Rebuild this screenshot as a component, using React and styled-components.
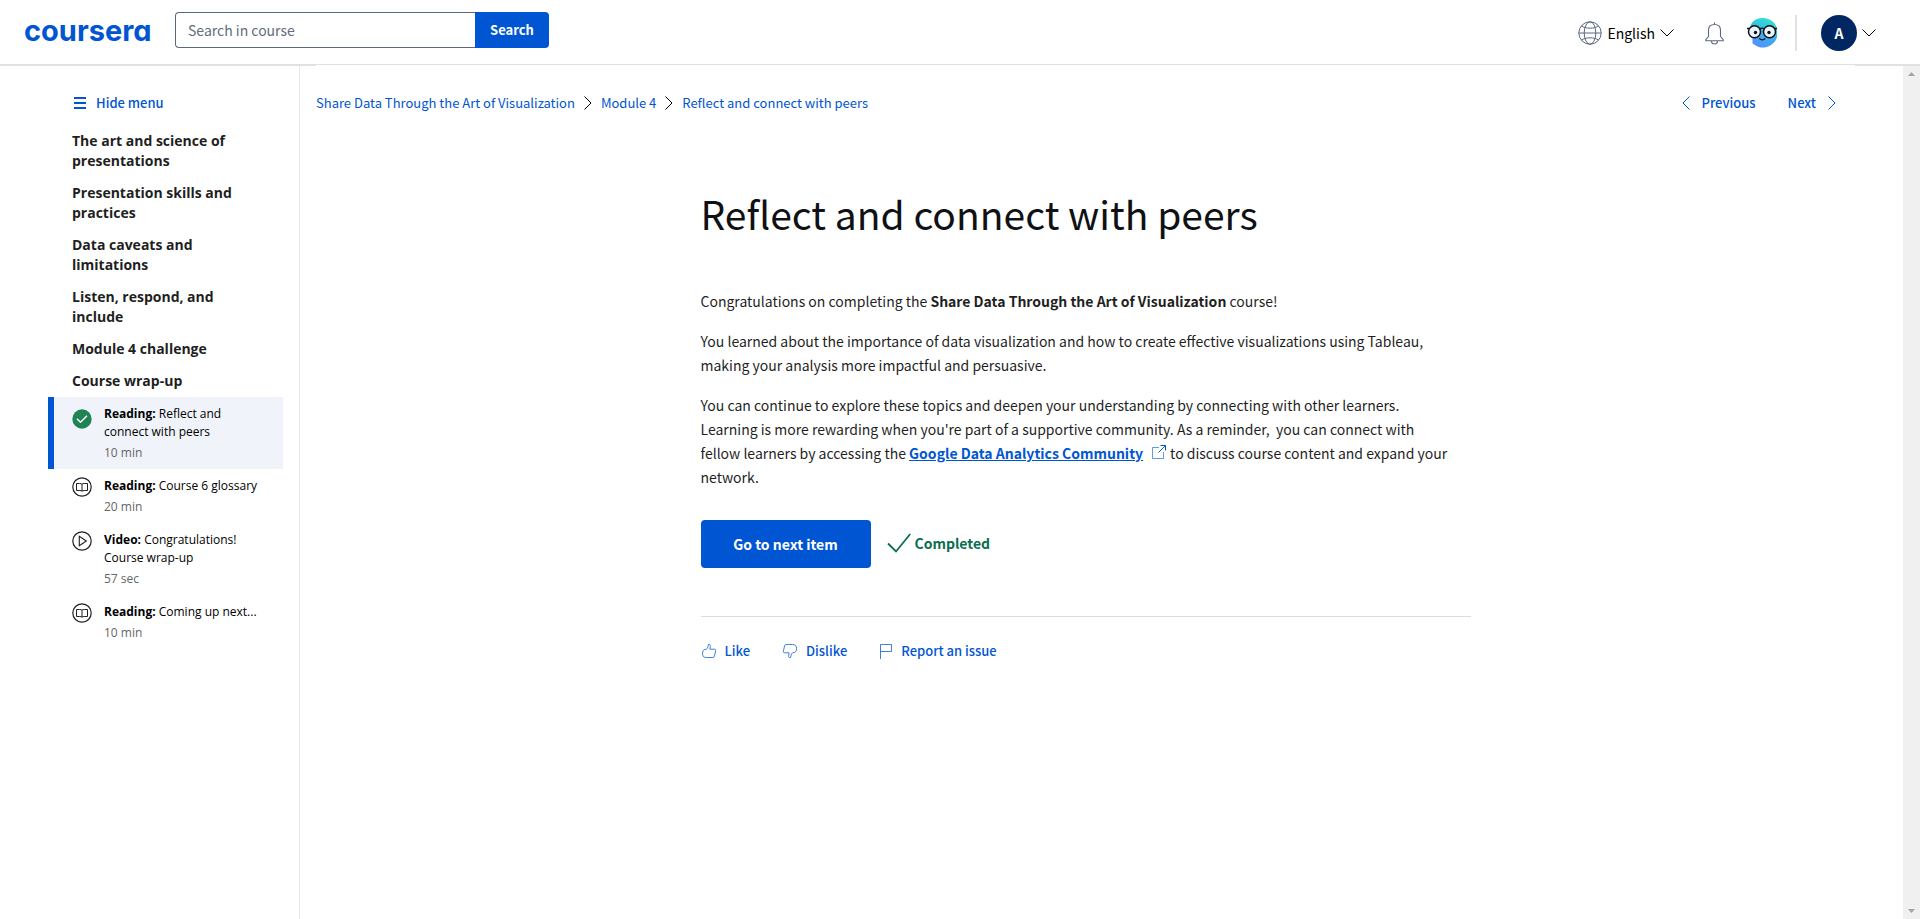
import React from "react";
import styled, { createGlobalStyle, css } from "styled-components";

const BLUE = "#0056d2";
const BODY_FONT = '"Source Sans Pro", "Noto Sans CJK SC", Arial, sans-serif';
const MENU_FONT = '"Open Sans", "Noto Sans", Arial, sans-serif';

const GlobalStyle = createGlobalStyle`
  *, *::before, *::after { box-sizing: border-box; }
  html, body, #root { height: 100%; }
  body {
    margin: 0;
    background: #fff;
    color: #1f1f1f;
    font-family: ${BODY_FONT};
    font-size: 14px;
    line-height: 24px;
  }
  button, input { font: inherit; }
  a { color: ${BLUE}; text-decoration: none; }
  svg { display: block; flex: none; }
`;

const Page = styled.div`
  display: flex;
  flex-direction: column;
  min-height: 100%;
`;

const Header = styled.header`
  display: flex;
  align-items: center;
  height: 66px;
  padding: 0 44px 0 24px;
  border-bottom: 2px solid #e1e1e1;
`;

const Logo = styled.a`
  width: 151px;
  padding-bottom: 2px;
  color: ${BLUE};
  font-family: Inter, Lato, sans-serif;
  font-size: 29px;
  font-weight: 700;
  line-height: 32px;
  font-feature-settings: "cv11";
`;

const SearchForm = styled.form`
  display: flex;
  width: 374px;
  height: 36px;
  margin-bottom: 4px;
`;

const SearchInput = styled.input`
  flex: 1;
  min-width: 0;
  padding: 0 12px;
  border: 1px solid #5b6780;
  border-right: 0;
  border-radius: 4px 0 0 4px;
  outline: 0;
  &::placeholder { color: #636c7c; opacity: 1; }
`;

const SearchButton = styled.button`
  width: 74px;
  padding: 0;
  border: 0;
  border-radius: 0 4px 4px 0;
  background: ${BLUE};
  color: #fff;
  font-size: 13px;
  font-weight: 700;
`;

const HeaderTools = styled.div`
  display: flex;
  align-items: center;
  margin-left: auto;
  padding-top: 2px;
`;

const ToolButton = styled.button`
  display: flex;
  align-items: center;
  gap: 5px;
  padding: 0;
  border: 0;
  background: none;
  color: #000;
`;

const LanguageButton = styled(ToolButton)`
  margin-right: 31px;
`;

const BellButton = styled(ToolButton)`
  margin-right: 23px;
`;

const Divider = styled.span`
  width: 2px;
  height: 36px;
  margin: 0 24px 0 18px;
  background: #e1e1e1;
`;

const Initial = styled.span`
  width: 36px;
  height: 36px;
  border-radius: 50%;
  background: #002761;
  color: #fff;
  font-weight: 700;
  line-height: 36px;
  text-align: center;
`;

const Body = styled.div`
  display: flex;
  flex: 1;
`;

const Sidebar = styled.nav`
  width: 300px;
  flex: none;
  padding: 25px 16px 0 48px;
  border-right: 1px solid #e5e7f5;
`;

const HideMenu = styled.button`
  display: flex;
  align-items: center;
  gap: 10px;
  height: 24px;
  margin: 0 0 10px 26px;
  padding: 0;
  border: 0;
  background: none;
  color: ${BLUE};
  font-size: 13px;
  font-weight: 500;
`;

const SectionTitle = styled.h2`
  margin: 0;
  padding: 6px 24px;
  color: #1f1f1f;
  font: 700 14px/20px ${MENU_FONT};
`;

const ItemList = styled.ul`
  margin: 0;
  padding: 0;
  list-style: none;
`;

const Item = styled.a`
  display: flex;
  gap: 12px;
  padding: 8px 24px 7px 18px;
  border-left: 6px solid transparent;
  color: #000;
  font: 12px/18px ${MENU_FONT};
  ${(p) =>
    p.$active &&
    css`
      border-color: ${BLUE};
      background: #f0f4fa;
      svg { margin-top: 4px; }
    `}
`;

const Duration = styled.span`
  display: block;
  margin-top: 3px;
  color: #666;
`;

const Main = styled.main`
  flex: 1;
  min-width: 0;
  padding: 0 48px 0 16px;
`;

const TopBar = styled.div`
  display: flex;
  align-items: center;
  justify-content: space-between;
  height: 75px;
  margin-top: -1px;
  padding-right: 19px;
  background: #fff;
  font-size: 13px;
`;

const Crumbs = styled.nav`
  display: flex;
  align-items: center;
  gap: 9px;
`;

const Pager = styled.nav`
  display: flex;
  gap: 32px;
`;

const PagerLink = styled.a`
  display: flex;
  align-items: center;
  gap: 12px;
  font-weight: 500;
`;

const Article = styled.article`
  max-width: 770px;
  margin: 0 auto;
  padding-top: 43px;
`;

const Title = styled.h1`
  margin: 0 0 46px;
  color: #0f1114;
  font-size: 39px;
  font-weight: 400;
  line-height: 60px;
`;

const Paragraph = styled.p`
  max-width: 752px;
  margin: 0 0 16px;
`;

const CommunityLink = styled.a`
  font-weight: 700;
  text-decoration: underline;
`;

const ExternalMark = styled.span`
  display: inline-block;
  margin: 0 4px 0 9px;
`;

const Actions = styled.div`
  display: flex;
  align-items: center;
  gap: 16px;
  margin-top: 31px;
  padding-bottom: 48px;
  border-bottom: 1px solid #dadce0;
`;

const NextButton = styled.button`
  width: 170px;
  height: 48px;
  border: 0;
  border-radius: 4px;
  background: ${BLUE};
  color: #fff;
  font-weight: 700;
`;

const Completed = styled.span`
  display: flex;
  align-items: center;
  gap: 4px;
  padding-bottom: 2px;
  color: #0b6e4f;
  font-weight: 700;
`;

const Feedback = styled.div`
  display: flex;
  gap: 32px;
  padding: 22px 0;
`;

const FeedbackButton = styled.button`
  display: flex;
  align-items: center;
  gap: 8px;
  padding: 0;
  border: 0;
  background: none;
  color: ${BLUE};
  font-size: 13px;
  font-weight: 500;
`;

const ScrollTrack = styled.div`
  display: flex;
  flex-direction: column;
  justify-content: space-between;
  align-items: center;
  width: 17px;
  padding: 6px 0;
  background: #f0f0f0;
`;

const Chevron = ({ dir = "right", color = BLUE }) => {
  if (dir === "down")
    return (
      <svg width="14" height="8" viewBox="0 0 14 8" fill="none" stroke={color}>
        <path d="M.5.5 7 7 13.5.5" />
      </svg>
    );
  return (
    <svg width="8" height="14" viewBox="0 0 8 14" fill="none" stroke={color}>
      <path d={dir === "left" ? "M7.5.5 1 7l6.500 6.500" : "M.5.5 7 7 .5 13.500"} />
    </svg>
  );
};

const Globe = () => (
  <svg width="24" height="24" viewBox="0 0 24 24" fill="none" stroke="#5b6780">
    <circle cx="12" cy="12" r="11.200" />
    <ellipse cx="12" cy="12" rx="5.800" ry="11.200" />
    <path d="M.8 12h22.400M3.500 5c2.200 1.400 5 2.200 8.500 2.200S18.300 6.400 20.500 5M3.500 19c2.200-1.400 5-2.200 8.500-2.200s6.300.8 8.500 2.200" />
  </svg>
);

const Bell = () => (
  <svg width="19" height="23" viewBox="0 0 19 23" fill="none" stroke="#5b6780" strokeWidth="1.1" strokeLinejoin="round">
    <path d="M9.500.5v2M3.500 14.500V8.300c0-3.600 2.500-5.800 6-5.800s6 2.200 6 5.800v6.200l2.700 3.200v1H.8v-1zM6.500 18.700c0 2 1.200 3.300 3 3.300s3-1.300 3-3.300" />
  </svg>
);

const Coach = () => (
  <svg width="30" height="30" viewBox="0 0 30 30">
    <defs>
      <linearGradient id="coach" x1=".7" y1="0" x2=".35" y2="1">
        <stop offset="0" stopColor="#2ee6cf" />
        <stop offset=".5" stopColor="#38b4ea" />
        <stop offset="1" stopColor="#5590ff" />
      </linearGradient>
    </defs>
    <path d="M15.500 0A14.800 14.800 0 1 1 5.500 25.300V20.500C-1 8 6 0 15.500 0z" fill="url(#coach)" />
    <g fill="#e9f4fc" stroke="#111" strokeWidth="1.500">
      <circle cx="7.500" cy="13.800" r="6" />
      <circle cx="22.500" cy="13.800" r="6" />
    </g>
    <path d="M0 10.500h2M28 10.500h2M12.500 11c1.500-1 3.500-1 5 0M12.300 20.300c1.500 2 4.400 2 5.900 0" fill="none" stroke="#111" strokeWidth="1.300" />
    <circle cx="8.500" cy="14.500" r="1.700" fill="#111" />
    <circle cx="22" cy="14.500" r="1.700" fill="#111" />
  </svg>
);

const Burger = () => (
  <svg width="12" height="12" viewBox="0 0 12 12" fill={BLUE}>
    <path d="M0 0h12v2H0zM0 5h12v2H0zM0 10h12v2H0z" />
  </svg>
);

const DoneIcon = () => (
  <svg width="20" height="20" viewBox="0 0 20 20" fill="none">
    <circle cx="10" cy="10" r="9.700" fill="#1f8354" />
    <path d="m5 9.700 3.500 3.600L15 6.700" stroke="#fff" strokeWidth="1.400" />
  </svg>
);

const BookIcon = () => (
  <svg width="20" height="20" viewBox="0 0 20 20" fill="none" stroke="#1f1f1f">
    <circle cx="10" cy="10" r="9.200" strokeWidth="1.200" />
    <path d="M10 7.300C9.500 6.600 8.700 6.500 7.500 6.500h-3v7h3.300c1.200 0 1.800.2 2.200.9.400-.7 1-.9 2.200-.9h3.300v-7h-3c-1.200 0-2 .1-2.500.8zv7" />
  </svg>
);

const PlayIcon = () => (
  <svg width="20" height="20" viewBox="0 0 20 20" fill="none" stroke="#1f1f1f">
    <circle cx="10" cy="10" r="9.200" strokeWidth="1.200" />
    <path d="M7.300 5.300v9.400L14.300 10z" strokeWidth="1.100" />
  </svg>
);

const Check = () => (
  <svg width="24" height="20" viewBox="0 0 24 20" fill="none" stroke="#0b6e4f" strokeWidth="1.800">
    <path d="m1 10.500 8 8L23.200 1" />
  </svg>
);

const External = () => (
  <svg width="14" height="14" viewBox="0 0 14 14" fill="none" stroke={BLUE}>
    <path d="M7 2.500H.5v11h11V7" strokeOpacity=".6" />
    <path d="M8.500.5h5v5M13.500.5l-7 7" />
  </svg>
);

const Thumb = ({ down }) => (
  <svg width="16" height="16" viewBox="0 0 16 16" fill="none" stroke={BLUE} strokeOpacity=".75">
    <path
      transform={down ? "rotate(180 8 8)" : undefined}
      d="M5.300 6.300C6.800 5 7.200 3.500 7.300 1.500c1.600-.6 2.400.7 2 2.300L8.900 6.200h4.600c1 0 1.300.8 1.100 1.600l-1.200 5.400c-.2.900-.7 1.300-1.600 1.300H5.400c-2.800 0-3.900-1.200-3.900-4.100s1.300-4.100 3.800-4.100z"
    />
  </svg>
);

const Flag = () => (
  <svg width="14" height="16" viewBox="0 0 14 16" fill="none" stroke={BLUE} strokeOpacity=".75">
    <path d="M1.500 16V1.500h11v7h-11" />
  </svg>
);

const Arrow = ({ up }) => (
  <svg width="7" height="4" viewBox="0 0 7 4" fill="#a3a3a3">
    <path d={up ? "M0 4 3.500 0 7 4z" : "M0 0 3.500 4 7 0z"} />
  </svg>
);

const sections = [
  "The art and science of presentations",
  "Presentation skills and practices",
  "Data caveats and limitations",
  "Listen, respond, and include",
  "Module 4 challenge",
  "Course wrap-up",
];

const items = [
  { kind: "Reading", title: "Reflect and connect with peers", time: "10 min", Icon: DoneIcon, active: true },
  { kind: "Reading", title: "Course 6 glossary", time: "20 min", Icon: BookIcon },
  { kind: "Video", title: "Congratulations! Course wrap-up", time: "57 sec", Icon: PlayIcon },
  { kind: "Reading", title: "Coming up next...", time: "10 min", Icon: BookIcon },
];

export default function App() {
  return (
    <Page>
      <GlobalStyle />
      <Header>
        <Logo href="#">coursera</Logo>
        <SearchForm role="search">
          <SearchInput placeholder="Search in course" aria-label="Search in course" />
          <SearchButton type="button">Search</SearchButton>
        </SearchForm>
        <HeaderTools>
          <LanguageButton type="button" aria-haspopup="true">
            <Globe />
            English
            <Chevron dir="down" color="#000" />
          </LanguageButton>
          <BellButton type="button" aria-label="Notifications">
            <Bell />
          </BellButton>
          <ToolButton type="button" aria-label="Coach">
            <Coach />
          </ToolButton>
          <Divider />
          <ToolButton type="button" aria-haspopup="true">
            <Initial>A</Initial>
            <Chevron dir="down" color="#000" />
          </ToolButton>
        </HeaderTools>
      </Header>
      <Body>
        <Sidebar>
          <HideMenu type="button">
            <Burger />
            Hide menu
          </HideMenu>
          {sections.map((s) => (
            <SectionTitle key={s}>{s}</SectionTitle>
          ))}
          <ItemList>
            {items.map(({ kind, title, time, Icon, active }) => (
              <li key={title}>
                <Item href="#" $active={active}>
                  <Icon />
                  <span>
                    <strong>{kind}:</strong> {title}
                    <Duration>{time}</Duration>
                  </span>
                </Item>
              </li>
            ))}
          </ItemList>
        </Sidebar>
        <Main>
          <TopBar>
            <Crumbs aria-label="Breadcrumb">
              <a href="#">Share Data Through the Art of Visualization</a>
              <Chevron color="#000" />
              <a href="#">Module 4</a>
              <Chevron color="#000" />
              <a href="#">Reflect and connect with peers</a>
            </Crumbs>
            <Pager aria-label="Items">
              <PagerLink href="#">
                <Chevron dir="left" />
                Previous
              </PagerLink>
              <PagerLink href="#">
                Next
                <Chevron />
              </PagerLink>
            </Pager>
          </TopBar>
          <Article>
            <Title>Reflect and connect with peers</Title>
            <Paragraph>
              Congratulations on completing the <strong>Share Data Through the Art of Visualization</strong> course!
            </Paragraph>
            <Paragraph>
              You learned about the importance of data visualization and how to create effective visualizations using
              Tableau, making your analysis more impactful and persuasive.
            </Paragraph>
            <Paragraph>
              You can continue to explore these topics and deepen your understanding by connecting with other learners.
              Learning is more rewarding when you're part of a supportive community. As a reminder,&nbsp; you can
              connect with fellow learners by accessing the{" "}
              <CommunityLink href="#">Google Data Analytics Community</CommunityLink>
              <ExternalMark>
                <External />
              </ExternalMark>
              to discuss course content and expand your network.
            </Paragraph>
            <Actions>
              <NextButton type="button">Go to next item</NextButton>
              <Completed>
                <Check />
                Completed
              </Completed>
            </Actions>
            <Feedback>
              <FeedbackButton type="button">
                <Thumb />
                Like
              </FeedbackButton>
              <FeedbackButton type="button">
                <Thumb down />
                Dislike
              </FeedbackButton>
              <FeedbackButton type="button">
                <Flag />
                Report an issue
              </FeedbackButton>
            </Feedback>
          </Article>
        </Main>
        <ScrollTrack aria-hidden="true">
          <Arrow up />
          <Arrow />
        </ScrollTrack>
      </Body>
    </Page>
  );
}
